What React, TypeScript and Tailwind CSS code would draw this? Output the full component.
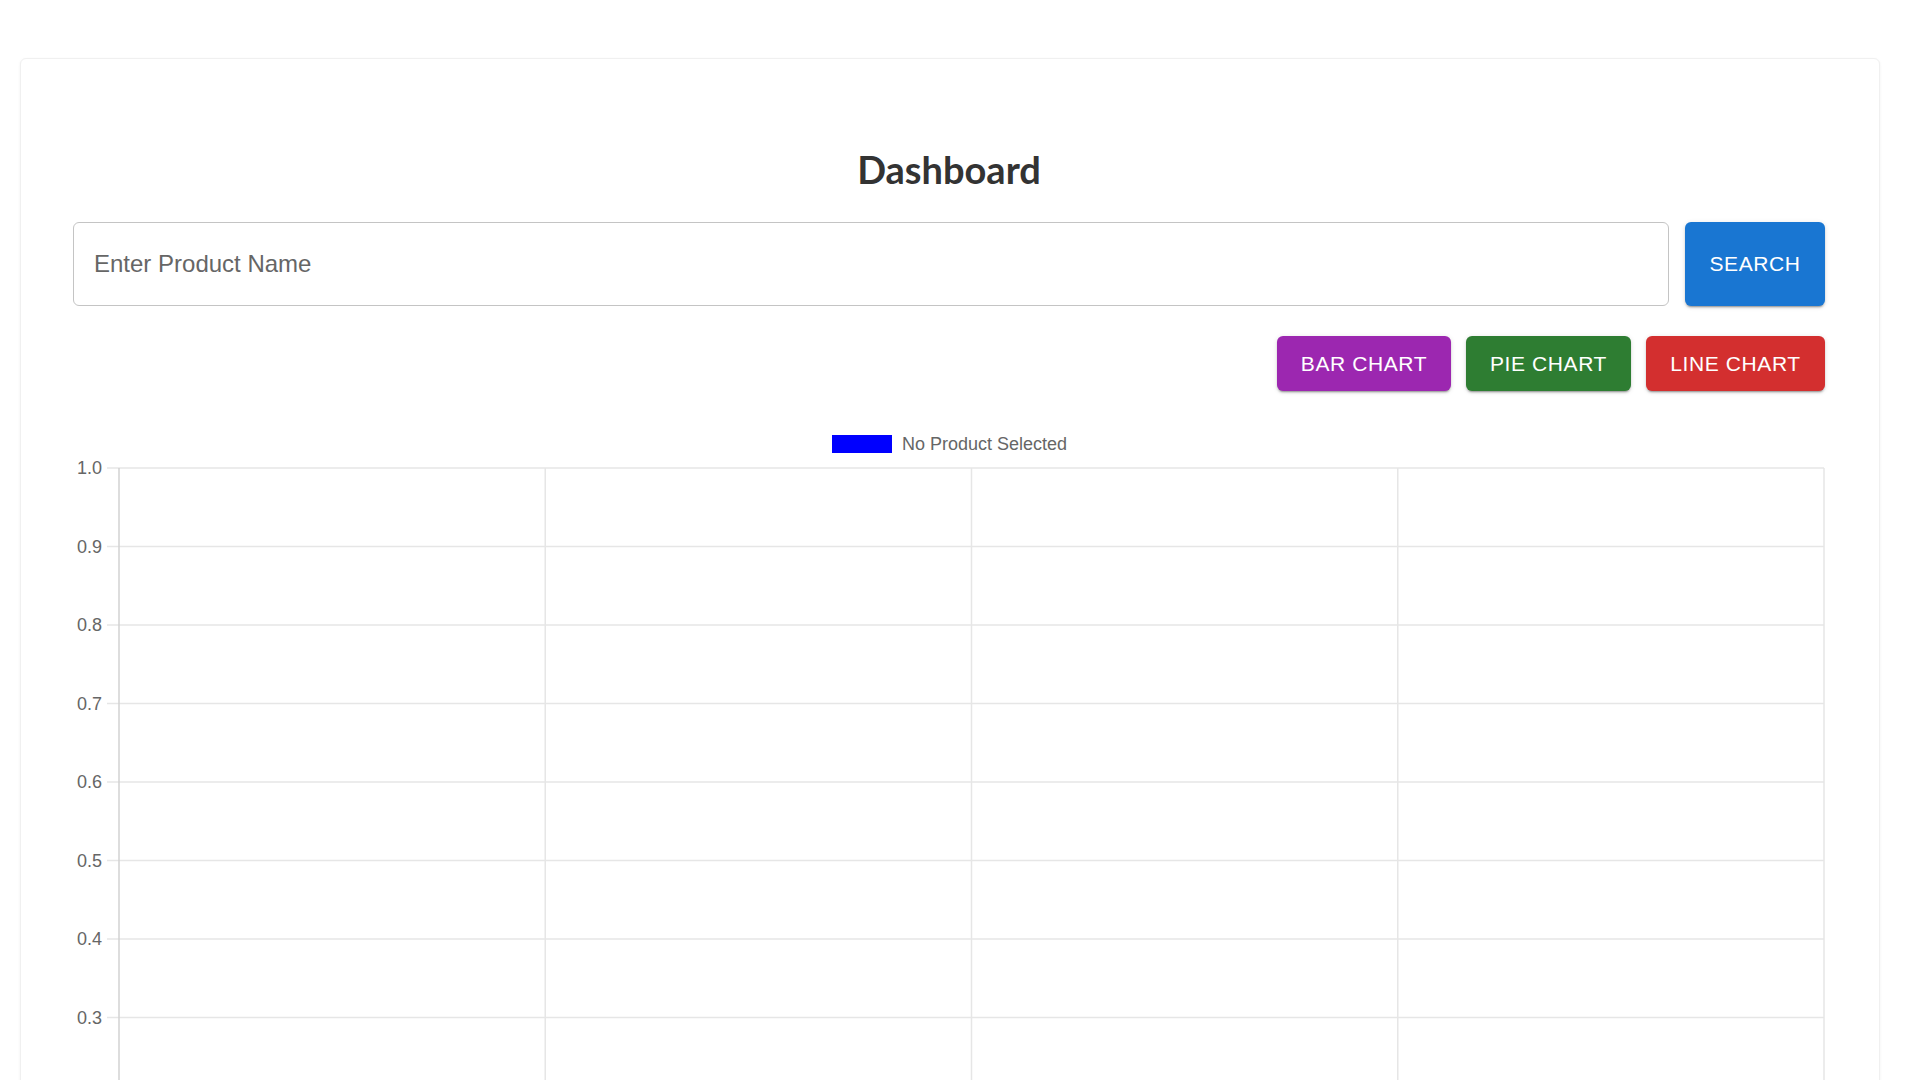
import { useState } from 'react';

const GRID = '#e6e6e6';
const AXIS = '#d2d2d2';

// y position of a tick value inside the chart svg
const yOf = (v: number) => 43 + (1 - v) * 785;

const ticks = [1.0, 0.9, 0.8, 0.7, 0.6, 0.5, 0.4, 0.3, 0.2, 0.1, 0.0];
const cols = [46, 472.25, 898.5, 1324.75, 1751];

const EmptyChart = () => {
    return (
        <svg width="1752" height="880" className="block" style={{ fontFamily: '"Liberation Sans", Arial, sans-serif' }}>
            {/* legend */}
            <rect x="759" y="10" width="60" height="18" fill="#0000ff" />
            <text x="829" y="25" fontSize="18" fill="#666">No Product Selected</text>

            {/* horizontal grid + y ticks */}
            {ticks.map((t) => (
                <g key={t}>
                    <line x1="34" x2="1751" y1={yOf(t)} y2={yOf(t)} stroke={GRID} strokeWidth="1.5" />
                    <text x="29" y={yOf(t) + 6} fontSize="18" fill="#666" textAnchor="end">
                        {t.toFixed(1)}
                    </text>
                </g>
            ))}

            {/* vertical grid */}
            {cols.map((x, i) => (
                <line
                    key={x}
                    x1={x}
                    x2={x}
                    y1={yOf(1)}
                    y2={yOf(0) + 12}
                    stroke={i === 0 ? AXIS : GRID}
                    strokeWidth="1.5"
                />
            ))}
        </svg>
    );
};

export default function App() {
    const [product, setProduct] = useState('');
    const [chartType, setChartType] = useState('bar');

    const btnShadow =
        'shadow-[0_3px_1px_-2px_rgba(0,0,0,0.2),0_2px_2px_0_rgba(0,0,0,0.14),0_1px_5px_0_rgba(0,0,0,0.12)]';

    return (
        <div className="min-h-screen bg-white pt-[58px] pb-10" style={{ fontFamily: '"Liberation Sans", Arial, sans-serif' }}>
            <div className="ml-5 mr-10 rounded-md border border-[#f0f0f0] bg-white shadow-[0_1px_3px_rgba(0,0,0,0.06)] pl-[52px] pr-[54px] pt-[88px] pb-12">
                <h1
                    className="text-center text-[38px] leading-[45px] font-bold text-[#333]"
                    style={{ fontFamily: 'Lato, "Open Sans", sans-serif' }}
                >
                    Dashboard
                </h1>

                <div className="mt-[30px] flex gap-4">
                    <input
                        type="text"
                        value={product}
                        onChange={(e) => setProduct(e.target.value)}
                        placeholder="Enter Product Name"
                        className="h-[84px] flex-1 rounded-md border border-[#c4c4c4] px-[20px] text-[24px] text-[#222] placeholder:text-[#666] outline-none"
                    />
                    <button className={`h-[84px] w-[140px] rounded-md bg-[#1976d2] text-[21px] tracking-[0.6px] text-white uppercase ${btnShadow}`}>
                        Search
                    </button>
                </div>

                <div className="mt-[30px] flex justify-end gap-[15px]">
                    <button
                        onClick={() => setChartType('bar')}
                        className={`h-[55px] w-[174px] rounded-md bg-[#9c27b0] text-[21px] tracking-[0.6px] text-white ${btnShadow}`}
                    >
                        BAR CHART
                    </button>
                    <button
                        onClick={() => setChartType('pie')}
                        className={`h-[55px] w-[165px] rounded-md bg-[#2e7d32] text-[21px] tracking-[0.6px] text-white ${btnShadow}`}
                    >
                        PIE CHART
                    </button>
                    <button
                        onClick={() => setChartType('line')}
                        className={`h-[55px] w-[179px] rounded-md bg-[#d32f2f] text-[21px] tracking-[0.6px] text-white ${btnShadow}`}
                    >
                        LINE CHART
                    </button>
                </div>

                <div className="mt-[34px]" data-type={chartType}>
                    <EmptyChart />
                </div>
            </div>
        </div>
    );
}
